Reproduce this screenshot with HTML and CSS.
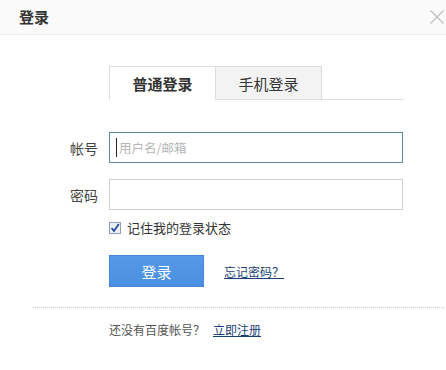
FILE: index.html
```html
<!DOCTYPE html>
<html lang="zh-CN">
<head>
<meta charset="utf-8">
<title>登录</title>
<link rel="stylesheet" href="styles.css">
</head>
<body>
<div class="dialog">
  <div class="header">
    <span class="title">登录</span>
    <svg class="close" width="16" height="14" viewBox="0 0 16 14"><path d="M1.5 0.5 L14.5 13.5 M14.5 0.5 L1.5 13.5" stroke="#bdbdbd" stroke-width="1.2" fill="none"/></svg>
  </div>
  <div class="content">
    <div class="tabs">
      <div class="tab active">普通登录</div>
      <div class="tab">手机登录</div>
    </div>
    <div class="row first">
      <label class="label">帐号</label>
      <div class="input focus"><span class="caret"></span><span class="placeholder">用户名/邮箱</span></div>
    </div>
    <div class="row">
      <label class="label">密码</label>
      <div class="input"></div>
    </div>
    <div class="remember">
      <span class="checkbox"><svg width="10" height="10" viewBox="0 0 10 10"><path d="M1.5 5 L4 8 L8.8 1" stroke="#2a4f9a" stroke-width="1.8" fill="none"/></svg></span>
      <span class="remember-text">记住我的登录状态</span>
    </div>
    <div class="actions">
      <button class="btn">登录</button>
      <a class="link forgot" href="#">忘记密码？</a>
    </div>
  </div>
  <div class="divider"></div>
  <div class="footer">
    <span class="muted">还没有百度帐号？</span>
    <a class="link" href="#">立即注册</a>
  </div>
</div>
</body>
</html>
```
FILE: styles.css
```css
html, body {
  margin: 0;
  padding: 0;
  background: #ffffff;
}
body {
  font-family: "Noto Sans CJK SC", "Noto Sans", sans-serif;
  color: #333;
  width: 446px;
  height: 370px;
  overflow: hidden;
}
.header {
  height: 35px;
  background: #fafafa;
  border-bottom: 1px solid #ececec;
  display: flex;
  align-items: center;
  justify-content: space-between;
  padding-left: 19px;
  box-sizing: border-box;
}
.title {
  font-size: 15px;
  font-weight: bold;
  color: #333;
  line-height: 16px;
}
.close {
  margin-right: 1px;
  margin-top: -1px;
}
.content {
  padding-top: 31px;
}
.tabs {
  margin-left: 109px;
  width: 295px;
  display: flex;
  border-bottom: 1px solid #dcdcdc;
}
.tab {
  box-sizing: border-box;
  height: 34px;
  width: 106px;
  display: flex;
  align-items: center;
  justify-content: center;
  font-size: 15px;
  color: #333;
  background: #f3f3f3;
  border-top: 1px solid #dcdcdc;
  border-right: 1px solid #dcdcdc;
  margin-bottom: -1px;
  border-bottom: 1px solid #dcdcdc;
}
.tab.active {
  width: 107px;
  background: #fff;
  font-weight: bold;
  border-left: 1px solid #dcdcdc;
  border-bottom-color: #fff;
}
.row {
  display: flex;
  align-items: center;
  margin-top: 16px;
}
.row.first {
  margin-top: 32px;
}
.label {
  width: 98px;
  text-align: right;
  margin-right: 11px;
  font-size: 14px;
  color: #444;
}
.input {
  box-sizing: border-box;
  width: 294px;
  height: 31px;
  border: 1px solid #d0d0d0;
  display: flex;
  align-items: center;
  padding-left: 6px;
}
.input.focus {
  border-color: #5a879b;
}
.caret {
  width: 1px;
  height: 19px;
  background: #222;
  margin-right: 2px;
}
.placeholder {
  font-size: 12.5px;
  color: #b5b5b5;
}
.remember {
  display: flex;
  align-items: center;
  margin-left: 109px;
  margin-top: 11px;
  height: 13px;
}
.checkbox {
  box-sizing: border-box;
  width: 12px;
  height: 12px;
  border: 1px solid #8f9fb3;
  background: #eef2f7;
  display: flex;
  align-items: center;
  justify-content: center;
  margin-right: 6px;
}
.remember-text {
  font-size: 13px;
  color: #333;
}
.actions {
  display: flex;
  align-items: center;
  margin-left: 109px;
  margin-top: 21px;
}
.btn {
  box-sizing: border-box;
  width: 95px;
  height: 32px;
  border: 1px solid #4585d6;
  background: linear-gradient(#5599e8, #4b8fe0);
  color: #fff;
  font-family: inherit;
  font-size: 15px;
  padding: 0;
  margin-right: 20px;
}
.link {
  font-size: 12px;
  color: #1b3f76;
  text-decoration: underline;
}
.divider {
  margin: 20px 2px 0 33px;
  border-top: 1px dotted #c8c8c8;
}
.footer {
  margin-left: 109px;
  margin-top: 13px;
  display: flex;
  align-items: center;
  gap: 8px;
  font-size: 12px;
}
.muted {
  color: #555;
}
```
